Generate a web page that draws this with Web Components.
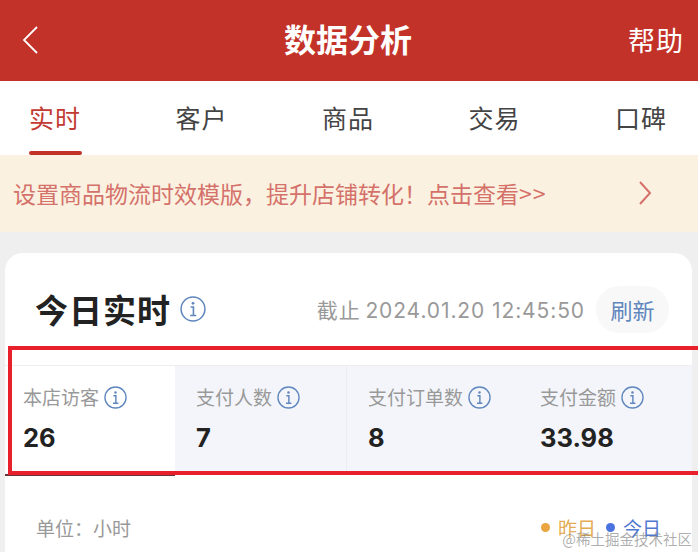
<!DOCTYPE html>
<html>
<head>
<meta charset="utf-8">
<style>
    html, body { margin: 0; height: 100%; overflow: hidden; background: #efefef; }
    body { font-family: "Noto Sans CJK SC", "Liberation Sans", sans-serif; position: relative; }
</style>
</head>
<body>
<app-header title="数据分析" action="帮助"></app-header>
<tab-bar items="实时,客户,商品,交易,口碑"></tab-bar>
<notice-bar>设置商品物流时效模版，提升店铺转化！点击查看<span style="letter-spacing:1px">&gt;&gt;</span></notice-bar>
<realtime-card>
    <stat-cell slot="stats" label="本店访客" value="26" active></stat-cell>
    <stat-cell slot="stats" label="支付人数" value="7" divider></stat-cell>
    <stat-cell slot="stats" label="支付订单数" value="8"></stat-cell>
    <stat-cell slot="stats" label="支付金额" value="33.98"></stat-cell>
</realtime-card>
<mark-box></mark-box>
<water-mark>@稀土掘金技术社区</water-mark>

<script>
    const cjk = '"Noto Sans CJK SC", "Liberation Sans", sans-serif'

    class InfoIcon extends HTMLElement {
        constructor () {
            super ()
            this.attachShadow({mode: 'open'})
            const size = this.getAttribute('size') || 23
            this.shadowRoot.innerHTML = `
                <style>
                    :host { display: inline-flex; flex: none; }
                    svg { display: block; }
                </style>
                <svg width="${size}" height="${size}" viewBox="0 0 24 24" fill="none" stroke="#5f86bd">
                    <circle cx="12" cy="12" r="11" stroke-width="1.4"/>
                    <circle cx="12" cy="6.8" r="1.3" fill="#5f86bd" stroke="none"/>
                    <path d="M9.8 10.2h2.6v7.6M9.4 18h5.6" stroke-width="1.5"/>
                </svg>`
        }
    }
    customElements.define('info-icon', InfoIcon)

    class AppHeader extends HTMLElement {
        constructor () {
            super ()
            this.attachShadow({mode: 'open'})
            this.shadowRoot.innerHTML = `
                <style>
                    :host { display: grid; grid-template-columns: 1fr auto 1fr; align-items: center; height: 81px; background: #c33228; color: #fff; padding: 0 14px 2px 22px; box-sizing: border-box; }
                    h1 { margin: 0 0 0 -10px; font-size: 32px; font-weight: 700; line-height: 1; padding-bottom: 3px; }
                    .action { justify-self: end; font-size: 27px; line-height: 1; letter-spacing: 1px; font-weight: 400; }
                    svg { display: block; }
                </style>
                <svg width="16" height="28" viewBox="0 0 16 28" fill="none" stroke="#fff" stroke-width="1.8"><path d="M15 1L2 14l13 13"/></svg>
                <h1>${this.getAttribute('title')}</h1>
                <div class="action">${this.getAttribute('action')}</div>`
        }
    }
    customElements.define('app-header', AppHeader)

    class TabBar extends HTMLElement {
        constructor () {
            super ()
            this.attachShadow({mode: 'open'})
            const tabs = this.getAttribute('items').split(',')
            this.shadowRoot.innerHTML = `
                <style>
                    :host { display: flex; justify-content: space-between; height: 74px; background: #fff; padding: 0 31px 0 29px; box-sizing: border-box; }
                    .tab { position: relative; font-size: 25px; line-height: 72px; color: #444; height: 74px; letter-spacing: 1px; }
                    .on { color: #c33a33; }
                    .on::after { content: ""; position: absolute; left: 0; right: -1px; bottom: 0; height: 4px; border-radius: 2px; background: #c33228; }
                </style>
                ${tabs.map((t, i) => `<div class="tab ${i === 0 ? 'on' : ''}">${t}</div>`).join('')}`
        }
    }
    customElements.define('tab-bar', TabBar)

    class NoticeBar extends HTMLElement {
        constructor () {
            super ()
            this.attachShadow({mode: 'open'})
            this.shadowRoot.innerHTML = `
                <style>
                    :host { display: flex; align-items: center; justify-content: space-between; height: 77px; background: #fbf1e0; color: #d4716a; padding: 0 46px 2px 13px; box-sizing: border-box; font-size: 23px; }
                    svg { display: block; }
                </style>
                <div><slot></slot></div>
                <svg width="14" height="24" viewBox="0 0 14 24" fill="none" stroke="#d4716a" stroke-width="2"><path d="M2 1l10 11L2 23"/></svg>`
        }
    }
    customElements.define('notice-bar', NoticeBar)

    class StatCell extends HTMLElement {
        constructor () {
            super ()
            this.attachShadow({mode: 'open'})
            this.shadowRoot.innerHTML = `
                <style>
                    :host { display: block; flex: none; width: 172px; box-sizing: border-box; padding: 18px 0 0 21px; background: #f3f5fa; }
                    :host([divider]) { border-right: 1px solid #ebedf3; }
                    :host([active]) { position: relative; background: #fff; padding-left: 18px; width: 170px; }
                    :host([active])::after { content: ""; position: absolute; left: 0; right: 0; bottom: -3px; height: 2px; background: #6b3438; }
                    .label { display: flex; align-items: center; gap: 5px; font-size: 19px; line-height: 26px; color: #999; }
                    .value { margin-top: 12px; font: 700 25.5px/32px "Inter", "Liberation Sans", sans-serif; color: #222; }
                </style>
                <div class="label">${this.getAttribute('label')}<info-icon></info-icon></div>
                <div class="value">${this.getAttribute('value')}</div>`
        }
    }
    customElements.define('stat-cell', StatCell)

    class RealtimeCard extends HTMLElement {
        constructor () {
            super ()
            this.attachShadow({mode: 'open'})
            this.shadowRoot.innerHTML = `
                <style>
                    :host { display: block; margin: 21px 6px 0 5px; background: #fff; border-radius: 18px 18px 0 0; height: 320px; overflow: hidden; }
                    .head { display: flex; align-items: center; height: 113px; padding: 0 23px 0 30px; box-sizing: border-box; border-bottom: 1px solid #eee; }
                    h2 { margin: 0 9px 0 0; font-size: 33px; line-height: 1; font-weight: 700; color: #222; letter-spacing: 1px; }
                    .time { margin-left: auto; font-size: 21px; color: #999; letter-spacing: .9px; font-family: "Inter", ${cjk}; }
                    .time span { margin-right: -2px; }
                    .refresh { margin-left: 11px; width: 73px; height: 47px; line-height: 47px; text-align: center; border-radius: 23px; background: #f8f8f8; color: #5f86bd; font-size: 22px; }
                    .stats { display: flex; height: 107px; background: #f3f5fa; }
                    .foot { display: flex; justify-content: space-between; align-items: center; padding: 41px 31px 0 31px; font-size: 19px; color: #999; }
                    .legend { display: flex; align-items: center; font-size: 19px; }
                    .dot { width: 9px; height: 9px; border-radius: 50%; margin-right: 8px; }
                </style>
                <div class="head">
                    <h2>今日实时</h2><info-icon size="26"></info-icon>
                    <div class="time"><span>截止</span> 2024.01.20 12:45:50</div>
                    <div class="refresh">刷新</div>
                </div>
                <div class="stats"><slot name="stats"></slot></div>
                <div class="foot">
                    <div>单位：小时</div>
                    <div class="legend">
                        <span class="dot" style="background:#eaa53f"></span><span style="color:#e3ac55;margin-right:10px">昨日</span>
                        <span class="dot" style="background:#4a72e0"></span><span style="color:#5078d0">今日</span>
                    </div>
                </div>`
        }
    }
    customElements.define('realtime-card', RealtimeCard)

    // the red frame sits on top of the screenshot, it is not part of the ui
    class MarkBox extends HTMLElement {
        constructor () {
            super ()
            this.attachShadow({mode: 'open'})
            this.shadowRoot.innerHTML = `
                <style>
                    :host { position: absolute; left: 8px; top: 346px; width: 694px; height: 129px; box-sizing: border-box; border: 4px solid #e8202c; pointer-events: none; }
                </style>`
        }
    }
    customElements.define('mark-box', MarkBox)

    class WaterMark extends HTMLElement {
        constructor () {
            super ()
            this.attachShadow({mode: 'open'})
            this.shadowRoot.innerHTML = `
                <style>
                    :host { position: absolute; right: 6px; bottom: 4px; font-size: 14.5px; line-height: 18px; color: rgba(120,120,120,.6); }
                </style>
                <slot></slot>`
        }
    }
    customElements.define('water-mark', WaterMark)
</script>
</body>
</html>
